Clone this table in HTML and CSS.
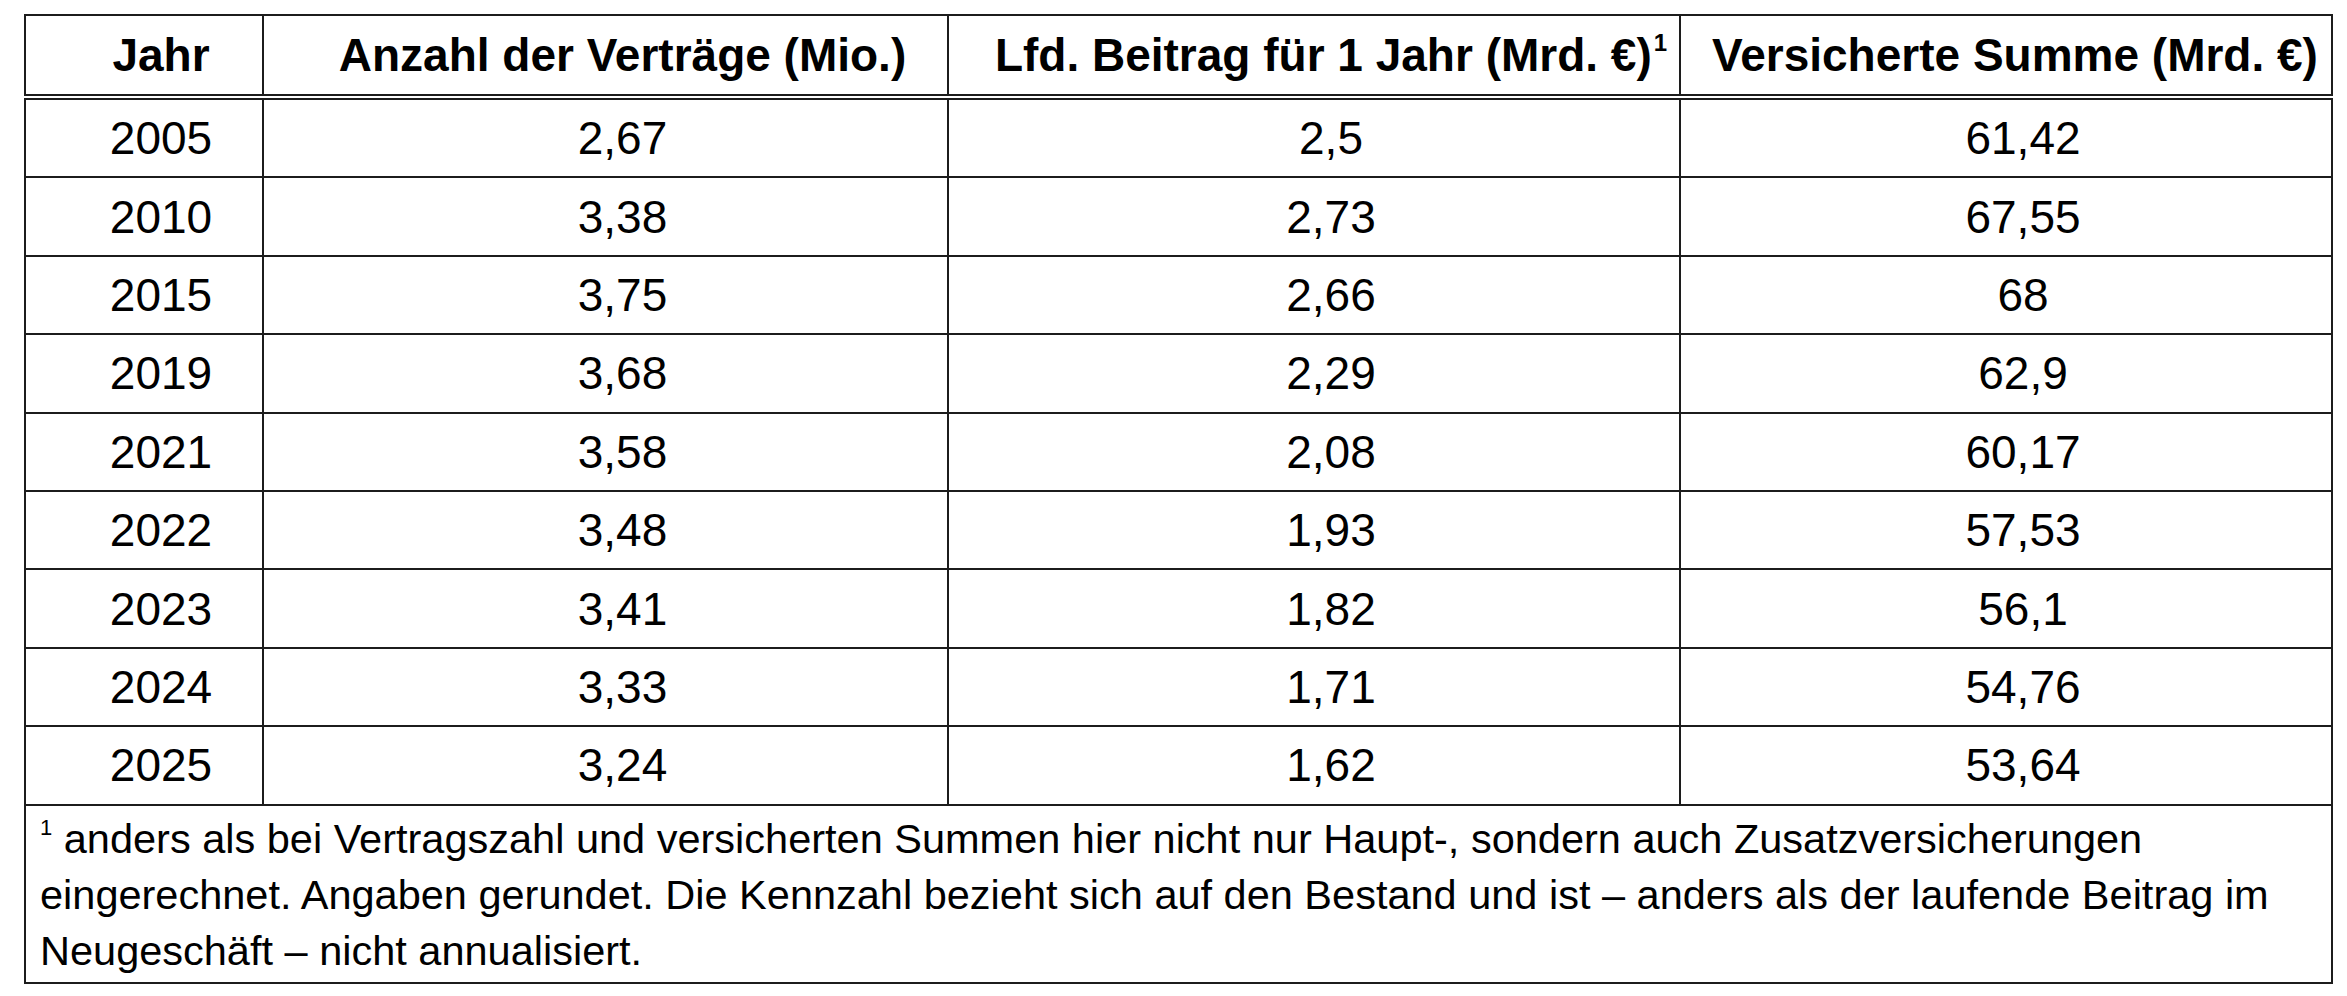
FILE: index.html
```html
<!DOCTYPE html>
<html lang="de">
<head>
<meta charset="utf-8">
<title>Bestand</title>
<link rel="stylesheet" href="styles.css">
</head>
<body>
<div class="wrap">
<table class="data">
  <colgroup>
    <col class="c1"><col class="c2"><col class="c3"><col class="c4">
  </colgroup>
  <thead>
    <tr>
      <th>Jahr</th>
      <th>Anzahl der Verträge (Mio.)</th>
      <th>Lfd. Beitrag für 1 Jahr (Mrd. €)<sup>1</sup></th>
      <th class="last">Versicherte Summe (Mrd. €)</th>
    </tr>
  </thead>
  <tbody>
    <tr><td>2005</td><td>2,67</td><td>2,5</td><td>61,42</td></tr>
    <tr><td>2010</td><td>3,38</td><td>2,73</td><td>67,55</td></tr>
    <tr><td>2015</td><td>3,75</td><td>2,66</td><td>68</td></tr>
    <tr><td>2019</td><td>3,68</td><td>2,29</td><td>62,9</td></tr>
    <tr><td>2021</td><td>3,58</td><td>2,08</td><td>60,17</td></tr>
    <tr><td>2022</td><td>3,48</td><td>1,93</td><td>57,53</td></tr>
    <tr><td>2023</td><td>3,41</td><td>1,82</td><td>56,1</td></tr>
    <tr><td>2024</td><td>3,33</td><td>1,71</td><td>54,76</td></tr>
    <tr><td>2025</td><td>3,24</td><td>1,62</td><td>53,64</td></tr>
  </tbody>
  <tfoot>
    <tr>
      <td colspan="4" class="note"><sup>1</sup> anders als bei Vertragszahl und versicherten Summen hier nicht nur Haupt-, sondern auch Zusatzversicherungen eingerechnet. Angaben gerundet. Die Kennzahl bezieht sich auf den Bestand und ist – anders als der laufende Beitrag im Neugeschäft – nicht annualisiert.</td>
    </tr>
  </tfoot>
</table>
</div>
</body>
</html>
```

FILE: styles.css
```css
html, body {
  margin: 0;
  padding: 0;
  background: #ffffff;
}

body {
  font-family: "Liberation Sans", Arial, sans-serif;
  color: #000000;
}

.wrap {
  padding: 14px 16px 0 24px;
}

.data {
  width: 2307px;
  border-collapse: collapse;
  table-layout: fixed;
  border: 2px solid #1c1c1c;
}

.c1 { width: 238px; }
.c2 { width: 685px; }
.c3 { width: 732px; }
.c4 { width: 652px; }

.data th,
.data td {
  border: 2px solid #1c1c1c;
  text-align: center;
  vertical-align: middle;
  padding: 0 2px 0 36px;
  white-space: nowrap;
}

.data th {
  font-weight: bold;
  font-size: 46px;
  height: 78px;
  border-bottom: 6px double #1c1c1c;
}

.data th.last {
  padding-left: 20px;
}

.data th sup {
  font-size: 24px;
  font-weight: bold;
  vertical-align: 20px;
  line-height: 0;
  margin-left: 2px;
}

.data tbody td {
  font-size: 46px;
  height: 76.4px;
}

.data td.note {
  text-align: left;
  white-space: normal;
  font-size: 41.5px;
  line-height: 56px;
  padding: 5px 40px 0 14px;
  height: 171px;
  vertical-align: top;
}

.data td.note sup {
  font-size: 22px;
  vertical-align: 18px;
  line-height: 0;
}
```
